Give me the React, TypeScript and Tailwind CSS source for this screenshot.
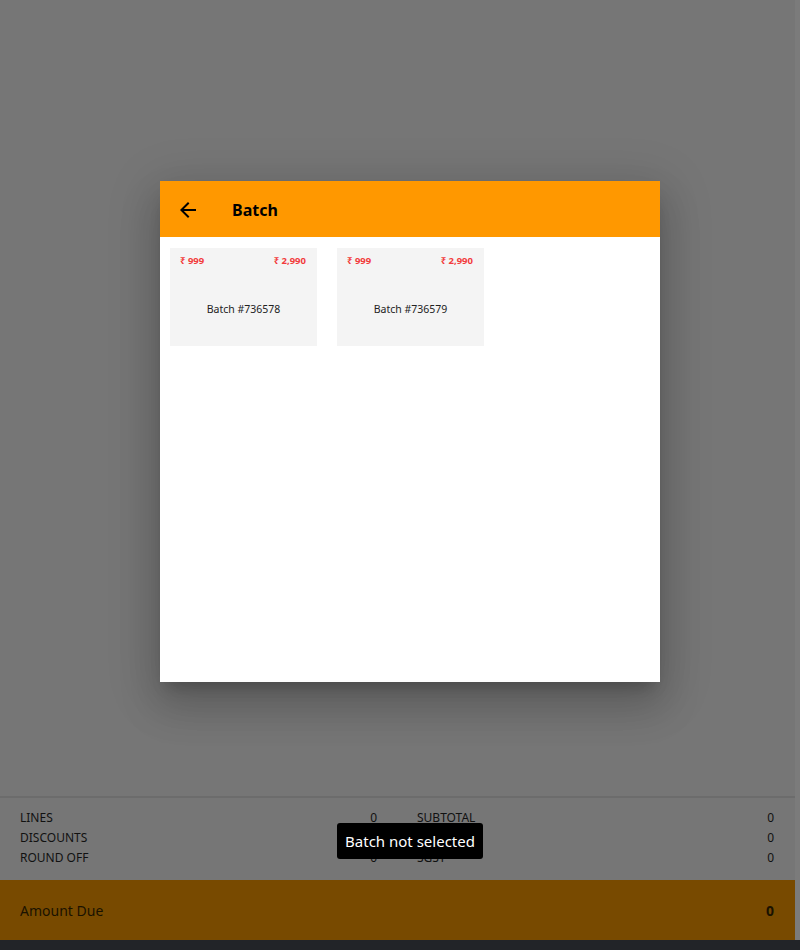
interface BatchItem {
  id: string;
  mrp: string;
  price: string;
}

const BATCHES: BatchItem[] = [
  { id: "736578", mrp: "₹ 999", price: "₹ 2,990" },
  { id: "736579", mrp: "₹ 999", price: "₹ 2,990" },
];

const LEFT_ROWS = [
  { label: "LINES", value: "0" },
  { label: "DISCOUNTS", value: "0" },
  { label: "ROUND OFF", value: "0" },
];

const RIGHT_ROWS = [
  { label: "SUBTOTAL", value: "0" },
  { label: "CGST", value: "0" },
  { label: "SGST", value: "0" },
];

function SummaryColumn({ rows }: { rows: { label: string; value: string }[] }) {
  return (
    <div className="flex flex-col">
      {rows.map((r) => (
        <div key={r.label} className="flex h-5 items-center justify-between">
          <span>{r.label}</span>
          <span>{r.value}</span>
        </div>
      ))}
    </div>
  );
}

// material "arrow_back"
function BackArrow() {
  return (
    <svg viewBox="0 0 24 24" className="h-6 w-6" fill="black">
      <path d="M20 11H7.83l5.59-5.59L12 4l-8 8 8 8 1.41-1.41L7.83 13H20v-2z" />
    </svg>
  );
}

export default function App() {
  return (
    <div
      className="relative h-[950px] w-full overflow-hidden bg-[#767676] text-[#111]"
      style={{ fontFamily: '"Noto Sans", "Open Sans", sans-serif' }}
    >
      <div className="flex h-full flex-col">
        <div className="flex flex-1">
          <div className="flex w-[795px] flex-col">
            <div className="flex-1" />
            <div className="border-t-2 border-[#6c6c6c] pb-[12px] pt-[10px] text-[12px]">
              <div className="grid grid-cols-2 gap-10 px-5 pr-[21px]">
                <SummaryColumn rows={LEFT_ROWS} />
                <SummaryColumn rows={RIGHT_ROWS} />
              </div>
            </div>
            <div className="flex h-[60px] items-center justify-between bg-[#784a00] px-5 pr-[21px] text-[14px] text-[#1a1200]">
              <span>Amount Due</span>
              <span className="font-bold">0</span>
            </div>
          </div>
          <div className="w-[5px] bg-[#7b7b7b]" />
        </div>
        <div className="h-[10px] bg-[#222428]" />
      </div>

      {/* batch dialog */}
      <div className="absolute left-[160px] top-[181px] flex h-[501px] w-[500px] flex-col bg-white shadow-[0_11px_15px_-7px_rgba(0,0,0,0.2),0_24px_38px_3px_rgba(0,0,0,0.14),0_9px_46px_8px_rgba(0,0,0,0.12)]">
        <div className="flex h-[56px] items-center bg-[#ff9800] pl-4 pt-[2px]">
          <BackArrow />
          <h2 className="ml-[32px] text-[16px] font-bold text-black">Batch</h2>
        </div>
        <div className="flex gap-5 p-[10px] pt-[11px]">
          {BATCHES.map((b) => (
            <div key={b.id} className="flex h-[98px] w-[147px] flex-col bg-[#f4f4f4] px-[10px] pt-[6px]">
              <div className="flex justify-between pr-px text-[9.5px] font-bold text-[#f23c3c]">
                <span>{b.mrp}</span>
                <span>{b.price}</span>
              </div>
              <p className="mt-[34px] text-center text-[10.5px] text-[#222]">Batch #{b.id}</p>
            </div>
          ))}
        </div>
      </div>

      {/* toast */}
      <div className="absolute left-[337px] top-[823px] flex h-[36px] w-[146px] items-center justify-center rounded-[3px] bg-black text-[15px] text-white">
        Batch not selected
      </div>
    </div>
  );
}
